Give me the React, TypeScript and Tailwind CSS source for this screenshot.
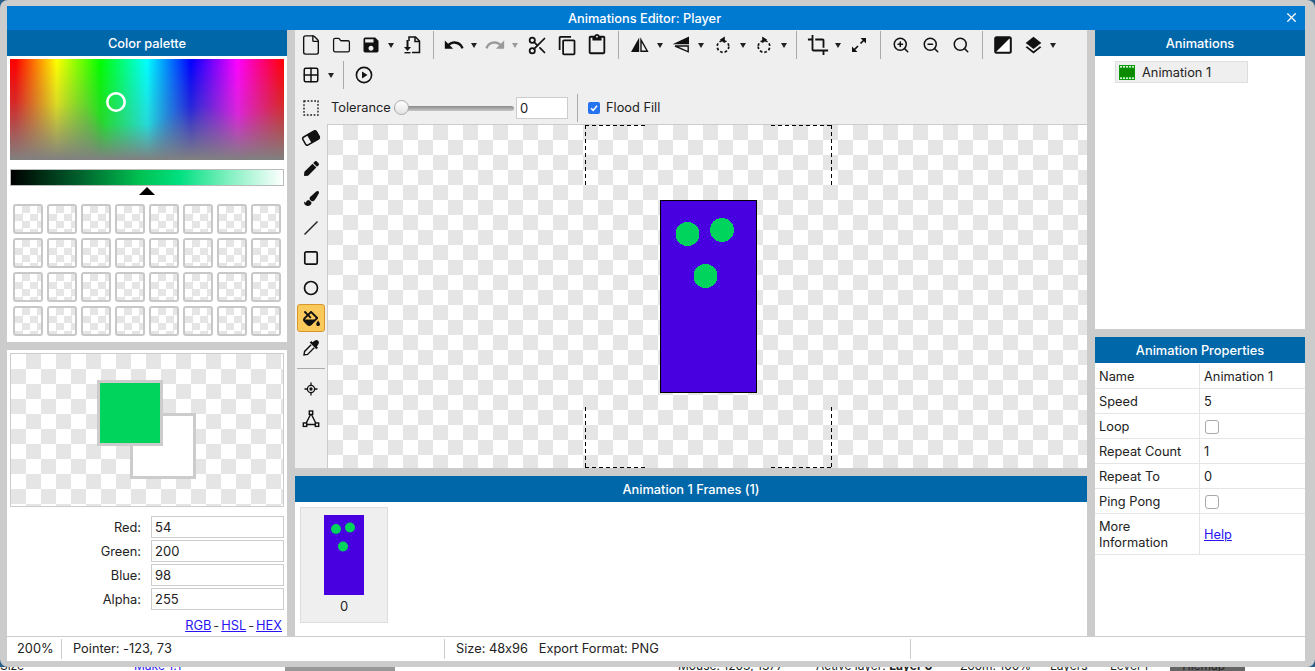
import type { ReactNode } from "react";
import { File, Folder, Grid2x2, Scissors, ZoomIn, ZoomOut, Search, X } from "lucide-react";
import { MdContentCopy, MdContentPaste, MdCrop, MdLayers, MdRedo, MdSave, MdUndo } from "react-icons/md";
import { FaFillDrip, FaPaintBrush, FaPen } from "react-icons/fa";

const checker =
  "bg-[repeating-conic-gradient(#e5e5e5_0%_25%,#fff_0%_50%)] bg-[length:30px_30px]";

function Header({ title }: { title: string }) {
  return (
    <div className="h-[26px] pt-[2px] shrink-0 bg-[#0067a9] text-white text-[12.8px] font-medium flex items-center justify-center">
      {title}
    </div>
  );
}

function Btn({ children }: { children: ReactNode }) {
  return (
    <div className="w-[30px] h-[30px] flex items-center justify-center text-[#111] shrink-0">
      {children}
    </div>
  );
}

function Caret({ light }: { light?: boolean }) {
  return (
    <div className="w-[10px] mr-px h-[30px] flex items-center justify-center shrink-0">
      <div
        className={`w-0 h-0 border-x-[3px] border-x-transparent border-t-[5px] ${
          light ? "border-t-[#999]" : "border-t-[#222]"
        }`}
      />
    </div>
  );
}

function Sep() {
  return <div className="w-px h-[28px] bg-[#aaa] mx-[6px] shrink-0" />;
}

function FlipH() {
  return (
    <svg width="20" height="20" viewBox="0 0 20 20">
      <path d="M9.2 2.5 V17 H1 Z" fill="#111" />
      <path d="M11 5 V16.2 H17.4 Z" fill="none" stroke="#111" strokeWidth="1.4" />
    </svg>
  );
}

function FlipV() {
  return (
    <svg width="20" height="20" viewBox="0 0 20 20">
      <path d="M18 1.5 V9.2 H1.5 Z" fill="#111" />
      <path d="M17.2 11 V16.8 L4 11 Z" fill="none" stroke="#111" strokeWidth="1.4" />
    </svg>
  );
}

function Rotate({ flip }: { flip?: boolean }) {
  return (
    <svg width="18" height="18" viewBox="0 0 18 18" className={flip ? "-scale-x-100" : ""}>
      <circle cx="9" cy="10.5" r="5.8" fill="none" stroke="#111" strokeWidth="1.7" strokeDasharray="2.6 2" />
      <path d="M10.8 0.5 L5.8 3.8 L10.8 7.2 Z" fill="#111" />
    </svg>
  );
}

function ImportDoc() {
  return (
    <svg width="20" height="20" viewBox="0 0 20 20" fill="none" stroke="#111" strokeWidth="1.5">
      <path d="M7 6 V2 H13.5 L17.5 6 V17.5 H10" />
      <path d="M13 2 V6.5 H17.5" />
      <path d="M5.5 5 V14" strokeWidth="2" />
      <path d="M2 12 H9 L5.5 16 Z" fill="#111" stroke="none" />
      <path d="M2.5 17.7 H8.5" strokeWidth="1.4" />
    </svg>
  );
}

function Expand() {
  return (
    <svg width="18" height="18" viewBox="0 0 18 18" fill="none" stroke="#111" strokeWidth="1.7">
      <path d="M3 15 L8 10 M10.5 7.5 L15 3" />
      <path d="M10.5 2 H16 V7.5 Z" fill="#111" stroke="none" />
      <path d="M2 10.5 V16 H7.5 Z" fill="#111" stroke="none" />
    </svg>
  );
}

function Contrast() {
  return (
    <svg width="18" height="18" viewBox="0 0 18 18">
      <rect x="1.2" y="1.2" width="15.6" height="15.6" rx="1.5" fill="#fff" stroke="#111" strokeWidth="2" />
      <path d="M1.2 1.2 H16.8 L1.2 16.8 Z" fill="#111" />
    </svg>
  );
}

function PlayRound() {
  return (
    <svg width="18" height="18" viewBox="0 0 18 18">
      <circle cx="9" cy="9" r="7.6" fill="none" stroke="#111" strokeWidth="1.6" />
      <path d="M7 5.5 L12.5 9 L7 12.5 Z" fill="#111" />
    </svg>
  );
}

function FilmIcon() {
  return (
    <svg width="16" height="15" viewBox="0 0 16 15">
      <rect width="16" height="15" fill="#0a9a0a" />
      <rect x="1" y="3.5" width="14" height="8" fill="#0b8a00" />
      {[1, 4, 7, 10, 13].map((x) => (
        <g key={x}>
          <rect x={x} y="1" width="2" height="1.6" fill="#d8f5d8" />
          <rect x={x} y="12.4" width="2" height="1.6" fill="#d8f5d8" />
        </g>
      ))}
    </svg>
  );
}

function EraserTool() {
  return (
    <svg width="20" height="20" viewBox="0 0 20 20">
      <g transform="rotate(-30 10 10)">
        <rect x="2.2" y="5.5" width="15.6" height="9" rx="2" fill="none" stroke="#111" strokeWidth="1.5" />
        <path d="M8 5 H16 a2.4 2.4 0 0 1 2.4 2.4 V12.6 a2.4 2.4 0 0 1 -2.4 2.4 H8 Z" fill="#111" />
      </g>
    </svg>
  );
}

function PipetteTool() {
  return (
    <svg width="18" height="18" viewBox="0 0 18 18">
      <path d="M10.5 3.2 L12.6 1.8 a2.3 2.3 0 0 1 3.6 3.6 L14.8 7.5 L16 8.7 L14.4 10.3 L7.7 3.6 L9.3 2 Z" fill="#111" />
      <path d="M9.2 5.8 L2.6 12.4 L2 16 L5.6 15.4 L12.2 8.8" fill="none" stroke="#111" strokeWidth="1.4" />
    </svg>
  );
}

function LineTool() {
  return (
    <svg width="18" height="18" viewBox="0 0 18 18">
      <path d="M2.5 15.5 L15.5 2.5" stroke="#222" strokeWidth="1.4" />
    </svg>
  );
}

function RectTool() {
  return (
    <svg width="18" height="18" viewBox="0 0 18 18">
      <rect x="2.8" y="2.8" width="12.4" height="12.4" rx="1.5" fill="none" stroke="#111" strokeWidth="1.7" />
    </svg>
  );
}

function CircleTool() {
  return (
    <svg width="18" height="18" viewBox="0 0 18 18">
      <circle cx="9" cy="9" r="6.5" fill="none" stroke="#111" strokeWidth="1.7" />
    </svg>
  );
}

function OriginTool() {
  return (
    <svg width="18" height="18" viewBox="0 0 18 18" fill="none" stroke="#111" strokeWidth="1.3">
      <circle cx="9" cy="9" r="3.6" />
      <circle cx="9" cy="9" r="1" fill="#111" />
      <path d="M9 2.5 V5.4 M9 12.6 V15.5 M2.5 9 H5.4 M12.6 9 H15.5" />
    </svg>
  );
}

function NodesTool() {
  return (
    <svg width="18" height="18" viewBox="0 0 18 18" fill="none" stroke="#111" strokeWidth="1.4">
      <path d="M9 3.5 L3.5 14.5 H14.5 Z" />
      <rect x="7.3" y="1" width="3.4" height="3.4" fill="#efefef" />
      <rect x="1.3" y="13" width="3.4" height="3.4" fill="#efefef" />
      <rect x="13.3" y="13" width="3.4" height="3.4" fill="#efefef" />
    </svg>
  );
}

// where the pure hue starts to wash out, per column of the picker
const fadeStops: [number, number][] = [
  [0, 41],
  [45, 46],
  [75, 42],
  [95, 65],
  [140, 65],
  [170, 50],
  [190, 46],
  [230, 55],
  [274, 44],
];

function fadeAt(x: number) {
  for (let i = 1; i < fadeStops.length; i++) {
    const [x0, y0] = fadeStops[i - 1];
    const [x1, y1] = fadeStops[i];
    if (x <= x1) return y0 + ((y1 - y0) * (x - x0)) / (x1 - x0);
  }
  return 44;
}

function HuePicker() {
  const columns = Array.from({ length: 137 }, (_, i) => i * 2);
  return (
    <svg width="274" height="101" className="block">
      <defs>
        <linearGradient id="hue">
          <stop offset="0" stopColor="#f00" />
          <stop offset="0.02" stopColor="#f00" />
          <stop offset="0.17" stopColor="#ff0" />
          <stop offset="0.33" stopColor="#0f0" />
          <stop offset="0.5" stopColor="#0ff" />
          <stop offset="0.66" stopColor="#00f" />
          <stop offset="0.83" stopColor="#f0f" />
          <stop offset="1" stopColor="#f00" />
        </linearGradient>
        {columns.map((x) => (
          <linearGradient key={x} id={`fade${x}`} x1="0" y1="0" x2="0" y2="101" gradientUnits="userSpaceOnUse">
            <stop offset="0" stopColor="#808080" stopOpacity="0" />
            <stop offset={fadeAt(x) / 101} stopColor="#808080" stopOpacity="0.3" />
            <stop offset="1" stopColor="#808080" stopOpacity="1" />
          </linearGradient>
        ))}
      </defs>
      <rect width="274" height="101" fill="url(#hue)" />
      {columns.map((x) => (
        <rect key={x} x={x} width="2" height="101" fill={`url(#fade${x})`} />
      ))}
      <circle cx="106" cy="43" r="8.7" fill="none" stroke="#fff" strokeWidth="2.6" />
    </svg>
  );
}

function Sprite() {
  return (
    <svg width="97" height="193" viewBox="0 0 97 193" shapeRendering="crispEdges" className="block ml-px">
      <rect x="0.5" y="0.5" width="96" height="192" fill="#4800e0" stroke="#000" />
      <circle cx="27.5" cy="34" r="12" fill="#00d45c" />
      <circle cx="62" cy="30" r="12" fill="#00d45c" />
      <circle cx="45.5" cy="76" r="12" fill="#00d45c" />
    </svg>
  );
}

function Selection() {
  const dash = { stroke: "#000", strokeWidth: 1, strokeDasharray: "4 3", fill: "none" };
  return (
    <svg width="759" height="344" className="absolute inset-0">
      <path d="M257 0.5 H317 M443 0.5 H503 M257 342.5 H317 M443 342.5 H503" {...dash} />
      <path d="M257.5 0 V61 M503.5 0 V61 M257.5 282 V343 M503.5 282 V343" {...dash} />
    </svg>
  );
}

function Toolbar() {
  return (
    <div className="h-[94px] shrink-0 bg-[#efefef] pl-px">
      <div className="h-[30px] flex items-center">
        <Btn><File size={22} strokeWidth={1.5} /></Btn>
        <Btn><Folder size={19} strokeWidth={1.6} /></Btn>
        <Btn><MdSave size={20} /></Btn>
        <Caret />
        <Btn><ImportDoc /></Btn>
        <Sep />
        <div className="-ml-px"><Btn><MdUndo size={22} /></Btn></div>
        <Caret />
        <Btn><MdRedo size={22} className="text-[#999]" /></Btn>
        <Caret light />
        <div className="ml-px"><Btn><Scissors size={21} strokeWidth={2} /></Btn></div>
        <Btn><MdContentCopy size={21} /></Btn>
        <Btn><MdContentPaste size={22} /></Btn>
        <Sep />
        <Btn><FlipH /></Btn>
        <Caret />
        <Btn><FlipV /></Btn>
        <Caret />
        <div className="ml-px"><Btn><Rotate /></Btn></div>
        <Caret />
        <Btn><Rotate flip /></Btn>
        <Caret />
        <Sep />
        <Btn><MdCrop size={22} /></Btn>
        <Caret />
        <Btn><Expand /></Btn>
        <Sep />
        <div className="-ml-px"><Btn><ZoomIn size={18} strokeWidth={2} /></Btn></div>
        <Btn><ZoomOut size={18} strokeWidth={2} /></Btn>
        <Btn><Search size={18} strokeWidth={2} /></Btn>
        <Sep />
        <div className="-ml-px"><Btn><Contrast /></Btn></div>
        <Btn><MdLayers size={21} /></Btn>
        <Caret />
      </div>
      <div className="h-[30px] flex items-center">
        <Btn><Grid2x2 size={18} strokeWidth={2} /></Btn>
        <Caret />
        <Sep />
        <div className="-ml-px"><Btn><PlayRound /></Btn></div>
      </div>
      <div className="h-[34px] pt-[2px] flex items-center text-[12.8px] text-[#222]">
        <Btn>
          <svg width="16" height="16" viewBox="0 0 16 16">
            <rect x="1" y="1" width="14" height="14" fill="none" stroke="#222" strokeWidth="1.4" strokeDasharray="1.8 1.6" />
          </svg>
        </Btn>
        <span className="ml-[5px] w-[59px]">Tolerance</span>
        <div className="relative ml-[4px] w-[120px] h-[16px] flex items-center">
          <div className="w-full h-[5px] rounded-full bg-gradient-to-b from-[#8a8a8a] to-[#c8c8c8]" />
          <div className="absolute left-0 top-0 w-[15px] h-[15px] rounded-full bg-gradient-to-b from-white to-[#e4e4e4] border border-[#aaa]" />
        </div>
        <input
          readOnly
          value="0"
          className="ml-[2px] w-[52px] h-[22px] bg-white border border-[#ccc] px-[3px] text-[13px] outline-none"
        />
        <div className="w-px h-[28px] bg-[#aaa] ml-[9px] mr-[10px]" />
        <div className="w-[12px] h-[12px] rounded-[2px] bg-[#2673f0] flex items-center justify-center">
          <svg width="10" height="10" viewBox="0 0 10 10">
            <path d="M2 5.2 L4.2 7.4 L8 2.8" fill="none" stroke="#fff" strokeWidth="1.6" />
          </svg>
        </div>
        <span className="ml-[6px]">Flood Fill</span>
      </div>
    </div>
  );
}

function ToolColumn() {
  return (
    <div className="w-[32px] shrink-0 bg-[#efefef] flex flex-col items-center">
      <div className="-mt-px"><Btn><EraserTool /></Btn></div>
      <Btn><FaPen size={15} /></Btn>
      <Btn><FaPaintBrush size={15} /></Btn>
      <Btn><LineTool /></Btn>
      <Btn><RectTool /></Btn>
      <Btn><CircleTool /></Btn>
      <div className="w-[28px] h-[28px] my-px rounded-[3px] bg-[#f9c95c] border border-[#d9962a] flex items-center justify-center text-[#111]">
        <FaFillDrip size={17} />
      </div>
      <Btn><PipetteTool /></Btn>
      <div className="h-[11px] w-[28px] pt-[5px] shrink-0">
        <div className="h-px bg-[#aaa]" />
      </div>
      <Btn><OriginTool /></Btn>
      <Btn><NodesTool /></Btn>
    </div>
  );
}

function ColorField({ label, value }: { label: string; value: string }) {
  return (
    <div className="h-[24px] flex items-center">
      <label className="w-[131px] pt-[2px] text-right text-[12.8px] text-[#222]">{label}</label>
      <input
        readOnly
        value={value}
        className="ml-[10px] w-[133px] h-[22px] bg-white border border-[#ccc] px-[3px] text-[13px] text-[#222] outline-none"
      />
    </div>
  );
}

function LeftPanel() {
  return (
    <div className="w-[280px] shrink-0 flex flex-col gap-2">
      <div className="h-[312px] bg-white flex flex-col">
        <Header title="Color palette" />
        <div className="pt-[3px] px-[3px]">
          <HuePicker />
          <div className="mt-[9px] h-[17px] w-[274px] border border-[#bbb] bg-[linear-gradient(to_right,#000_0%,#00602c_25%,#00c050_47%,#00e080_62%,#80f0c0_80%,#fff_100%)]" />
          <div className="ml-[129px] mt-px w-0 h-0 border-x-[8px] border-x-transparent border-b-[8px] border-b-black" />
          <div className="mt-[9px] ml-[3px] grid grid-cols-[repeat(8,30px)] auto-rows-[30px] gap-[4px]">
            {Array.from({ length: 32 }, (_, i) => (
              <div key={i} className="rounded-[3px] border-2 border-[#c8c8c8] bg-[repeating-conic-gradient(#e5e5e5_0%_25%,#fff_0%_50%)] bg-[length:15px_15px]" />
            ))}
          </div>
        </div>
      </div>
      <div className="flex-1 bg-white pt-[3px] px-[3px]">
        <div className={`relative h-[154px] w-[274px] border border-[#ccc] ${checker}`}>
          <div className="absolute left-[119px] top-[59px] w-[66px] h-[66px] bg-white border-[3px] border-[#ccc]" />
          <div className="absolute left-[86px] top-[26px] w-[66px] h-[66px] bg-[#00d45c] border-[3px] border-[#ccc]" />
        </div>
        <div className="mt-[8px]">
          <ColorField label="Red:" value="54" />
          <ColorField label="Green:" value="200" />
          <ColorField label="Blue:" value="98" />
          <ColorField label="Alpha:" value="255" />
        </div>
        <div className="mt-[5px] pr-[2px] flex justify-end gap-[2px] text-[12.8px] text-[#333]">
          <a className="text-[#2a14f5] underline">RGB</a>
          <span>-</span>
          <a className="text-[#2a14f5] underline">HSL</a>
          <span>-</span>
          <a className="text-[#2a14f5] underline">HEX</a>
        </div>
      </div>
    </div>
  );
}

function CenterPanel() {
  return (
    <div className="w-[792px] shrink-0 ml-2 flex flex-col gap-2">
      <div className="h-[438px] flex flex-col">
        <Toolbar />
        <div className="flex-1 flex">
          <ToolColumn />
          <div className={`relative flex-1 flex items-center justify-center border-t border-[#ccc] border-l ${checker}`}>
            <Sprite />
            <Selection />
          </div>
        </div>
      </div>
      <div className="flex-1 bg-white flex flex-col">
        <Header title="Animation 1 Frames (1)" />
        <div className="pt-[5px] pl-[5px]">
          <div className="w-[88px] h-[116px] bg-[#efefef] border border-[#ddd] flex flex-col items-center pt-[7px]">
            <svg width="40" height="80" className="block">
              <rect width="40" height="80" fill="#4800e0" />
              <circle cx="12" cy="14" r="5" fill="#00d45c" />
              <circle cx="26" cy="12.5" r="5" fill="#00d45c" />
              <circle cx="19" cy="31.5" r="5" fill="#00d45c" />
            </svg>
            <span className="mt-[2px] text-[13px] text-[#222]">0</span>
          </div>
        </div>
      </div>
    </div>
  );
}

const tick = <div className="ml-[1px] w-[14px] h-[14px] rounded-[3px] border border-[#aaa] bg-white" />;

const props: [string, ReactNode][] = [
  ["Name", "Animation 1"],
  ["Speed", "5"],
  ["Loop", tick],
  ["Repeat Count", "1"],
  ["Repeat To", "0"],
  ["Ping Pong", tick],
];

function RightPanel() {
  return (
    <div className="w-[210px] shrink-0 ml-2 flex flex-col gap-2">
      <div className="h-[299px] bg-white flex flex-col">
        <Header title="Animations" />
        <div className="pt-[5px] pl-[20px]">
          <div className="w-[133px] h-[22px] bg-[#efefef] border border-[#ddd] flex items-center pl-[3px] text-[12.8px] text-[#222]">
            <FilmIcon />
            <span className="ml-[7px] pt-[2px]">Animation 1</span>
          </div>
        </div>
      </div>
      <div className="flex-1 bg-white flex flex-col text-[12.8px] text-[#222]">
        <Header title="Animation Properties" />
        <div className="h-px shrink-0" />
        {props.map(([name, value]) => (
          <div key={name} className="h-[25px] flex items-center border-b border-[#e5e5e5]">
            <div className="w-[105px] h-full pl-[4px] pt-[2px] flex items-center border-r border-[#e5e5e5]">{name}</div>
            <div className="pl-[4px] pt-[2px]">{value}</div>
          </div>
        ))}
        <div className="h-[41px] flex items-center border-b border-[#e5e5e5]">
          <div className="w-[105px] h-full pl-[4px] pt-[2px] flex items-center leading-4 border-r border-[#e5e5e5]">
            More
            <br />
            Information
          </div>
          <a className="pl-[4px] pt-[2px] text-[#2a14f5] underline">Help</a>
        </div>
      </div>
    </div>
  );
}

function StatusBar() {
  return (
    <div className="h-[25px] shrink-0 bg-white border-t border-[#ccc] flex items-center text-[12.8px] text-[#222]">
      <div className="w-[55px] h-[20px] pl-[10px] flex items-center border-r border-[#ccc]">200%</div>
      <div className="w-[383px] h-[20px] pl-[11px] flex items-center border-r border-[#ccc]">Pointer: -123, 73</div>
      <div className="w-[466px] h-[20px] pl-[11px] flex items-center border-r border-[#ccc]">
        Size: 48x96&nbsp;&nbsp; Export Format: PNG
      </div>
    </div>
  );
}

function BackdropStrip() {
  return (
    <div className="h-[4px] bg-white overflow-hidden flex text-[12px] text-[#222] relative">
      <div className="absolute left-[285px] w-[110px] inset-y-0 bg-[#999]" />
      <div className="absolute left-[1170px] w-[75px] inset-y-0 bg-[#666]" />
      <div className="absolute inset-x-0 -top-[9px] h-[16px] leading-[16px]">
        <span className="absolute left-0">Size</span>
        <span className="absolute left-[134px] text-[#2a14f5]">Make 1:1</span>
        <span className="absolute left-[678px]">Mouse: 1203, 1377</span>
        <span className="absolute left-[816px]">Active layer: <b>Layer 0</b></span>
        <span className="absolute left-[960px]">Zoom: 100%</span>
        <span className="absolute left-[1050px]">Layers</span>
        <span className="absolute left-[1110px]">Level 1</span>
        <span className="absolute left-[1180px]">Tilemap</span>
      </div>
    </div>
  );
}

export default function App() {
  return (
    <div className="w-[1315px] h-[671px] overflow-hidden bg-[#2a5f8a] [font-family:Inter,'Liberation_Sans',sans-serif] [font-feature-settings:'calt'_0]">
      <div className="h-[667px] bg-[#ccc] rounded-lg pt-[6px] pl-[7px] pr-[10px] pb-[6px] flex flex-col">
        <div className="h-[24px] pt-[2px] shrink-0 bg-[#0079d1] relative flex items-center text-white text-[12.8px] font-medium pl-[561px]">
          Animations Editor: Player
          <X size={15} strokeWidth={2} className="absolute right-[6px] top-[4px]" />
        </div>
        <div className="flex-1 flex min-h-0">
          <LeftPanel />
          <CenterPanel />
          <RightPanel />
        </div>
        <StatusBar />
      </div>
      <BackdropStrip />
    </div>
  );
}
